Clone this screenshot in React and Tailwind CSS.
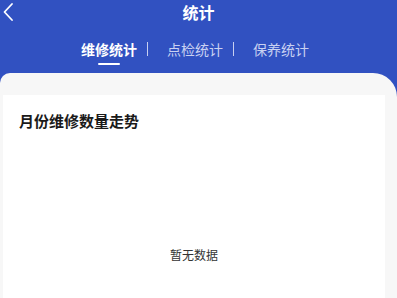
export default function App() {
  const tabs = ["维修统计", "点检统计", "保养统计"];
  const active = 0;

  return (
    <div
      className="flex h-[298px] w-full flex-col overflow-hidden bg-[#3151c1]"
      style={{ fontFamily: '"Noto Sans CJK SC", "Noto Sans", sans-serif' }}
    >
      {/* Header */}
      <div className="relative flex h-[24px] shrink-0 items-center justify-center">
        <svg
          className="absolute left-[2px] top-[2px]"
          width="12"
          height="20"
          viewBox="0 0 12 20"
          fill="none"
        >
          <path d="M10 2 L2.5 10 L10 18" stroke="white" strokeWidth="1.8" strokeLinecap="round" strokeLinejoin="round" />
        </svg>
        <span className="text-[16px] font-bold leading-none text-white">统计</span>
      </div>

      {/* Tabs */}
      <div className="mt-[15px] flex h-[20px] shrink-0 items-center justify-center gap-[19px] pr-[7px]">
        {tabs.map((t, i) => (
          <div
            key={t}
            className={`relative flex h-[14px] items-center ${
              i < tabs.length - 1 ? "border-r border-[#c7cff0] pr-[10px]" : ""
            }`}
          >
            <span
              className={`text-[14px] leading-none ${
                i === active ? "font-bold text-white" : "text-[#c9d1f1]"
              }`}
            >
              {t}
            </span>
            {i === active && (
              <span className="absolute left-[17px] top-[21px] h-[2px] w-[22px] rounded-full bg-white" />
            )}
          </div>
        ))}
      </div>

      {/* Content */}
      <div className="mt-[14px] flex flex-1 flex-col rounded-tl-[10px] rounded-tr-[24px] bg-[#f7f7f7] pl-[3px] pr-[12px] pt-[22px]">
        <div className="flex flex-1 flex-col bg-white px-[16px] pt-[18px]">
          <h2 className="text-[15px] font-bold leading-none text-[#1a1a1a]">月份维修数量走势</h2>
          <div className="flex flex-1 items-start justify-center pt-[121px]">
            <span className="text-[12px] leading-none text-[#333333]">暂无数据</span>
          </div>
        </div>
      </div>
    </div>
  );
}
